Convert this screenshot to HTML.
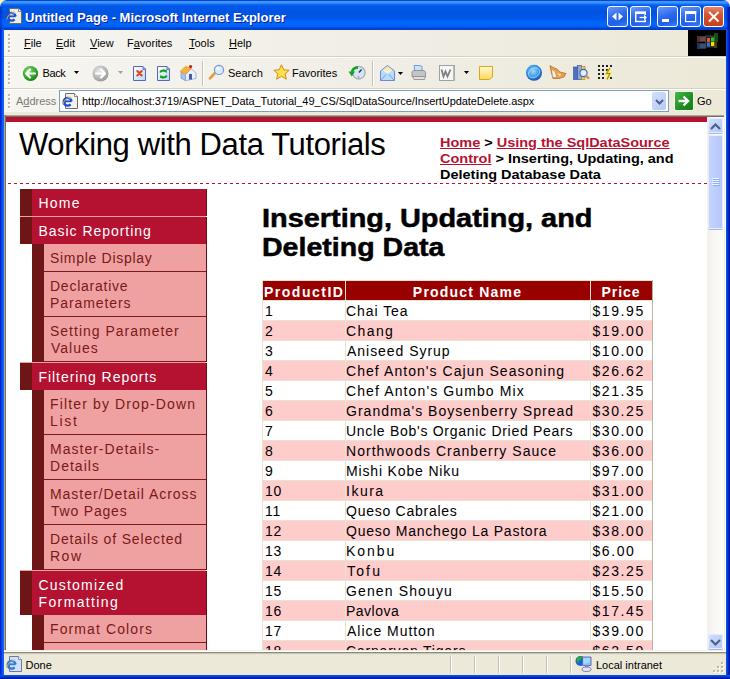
<!DOCTYPE html>
<html><head><meta charset="utf-8"><title>Untitled Page</title>
<style>
html,body{margin:0;padding:0;}
body{width:730px;height:679px;overflow:hidden;position:relative;background:#0054E3;font-family:"Liberation Sans",sans-serif;}
.t{position:absolute;white-space:nowrap;}
.b{position:absolute;}
svg{position:absolute;overflow:visible;}
</style></head><body>

<div class="b" style="left:0px;top:0px;width:12px;height:12px;background:#FFF2B8;"></div>
<div class="b" style="left:718px;top:0px;width:12px;height:12px;background:#F2F1E6;"></div>
<div class="b" style="left:0px;top:0px;width:730px;height:30px;background:linear-gradient(180deg,#0846C8 0px,#0846C8 1px,#3D95FF 1px,#3D95FF 3px,#1470F8 4px,#0058E8 6px,#0054E3 12px,#0056E8 18px,#0064FA 22px,#0066FF 25px,#005FF0 27px,#0041D0 28px,#0041D0 30px);border-radius:7px 7px 0 0;"></div>
<div class="b" style="left:726px;top:7px;width:4px;height:23px;background:linear-gradient(90deg,rgba(0,40,200,0) 0px,rgba(0,30,190,.5) 1px,rgba(0,20,170,.8) 2px,rgba(0,16,150,.9) 4px);"></div>
<div class="b" style="left:0px;top:7px;width:3px;height:23px;background:linear-gradient(90deg,rgba(0,20,180,.6) 0px,rgba(0,40,200,.3) 2px,rgba(0,40,200,0) 3px);"></div>
<div class="b" style="left:0px;top:29px;width:4px;height:650px;background:linear-gradient(90deg,#0019CF 0px,#0831D9 1px,#0046EA 2px,#166AFF 3px,#0A5CF5 4px);"></div>
<div class="b" style="left:726px;top:29px;width:4px;height:650px;background:linear-gradient(90deg,#0A5CF5 0px,#0846E0 1px,#0031D0 2px,#001FB8 3px,#001090 4px);"></div>
<div class="b" style="left:0px;top:675px;width:730px;height:4px;background:linear-gradient(180deg,#0A5CF5 0px,#0846E0 1px,#0031D0 2px,#001FB8 3px,#001090 4px);"></div>
<svg style="left:5.5px;top:7.5px" width="18" height="17" viewBox="0 0 18 17">
<path d="M3.5 0.5h9l3 3v12h-12z" fill="#EEEDE6" stroke="#6E6C60"/>
<path d="M12.5 0.5v3h3" fill="#fff" stroke="#6E6C60" stroke-width=".8"/>
<path d="M1.8 8.3h7.8" stroke="#1C4FD8" stroke-width="1.8"/>
<path d="M9.6 8.3A4 3.9 0 1 0 8.6 11.4" stroke="#1C4FD8" stroke-width="2.3" fill="none"/>
<path d="M7 5.5h2" stroke="#3AA0F8" stroke-width="1"/>
<path d="M0.8 11.5C1.5 8 4 5 8.5 3.8" stroke="#E8B040" stroke-width="1" fill="none" opacity=".9"/>
</svg>
<div class="t" style="left:25px;top:9.50px;font-size:13px;line-height:16px;color:#fff;font-weight:700;letter-spacing:0px;text-shadow:1px 1px 0 #0A1E9A;">Untitled Page - Microsoft Internet Explorer</div>
<div class="b" style="left:607px;top:6px;width:19px;height:19px;border:1px solid #fff;border-radius:3px;background:linear-gradient(160deg,#6A9CF8 0%,#2D6AF0 45%,#1F5EE8 70%,#3E7CF5 100%);"><svg style="left:3px;top:4px" width="13" height="11"><path d="M1 5.5L5.5 1.5v8z M12 5.5L7.5 1.5v8z" fill="#fff"/></svg></div>
<div class="b" style="left:630px;top:6px;width:19px;height:19px;border:1px solid #fff;border-radius:3px;background:linear-gradient(160deg,#6A9CF8 0%,#2D6AF0 45%,#1F5EE8 70%,#3E7CF5 100%);"><svg style="left:3px;top:4px" width="14" height="12"><path d="M1.75 1.5v9h9.5v-2M1.75 1.5h9.5v2.5" stroke="#fff" stroke-width="1.5" fill="none"/><rect x="1" y="0.5" width="11" height="2.5" fill="#fff"/><path d="M5.5 6.5h5" stroke="#fff" stroke-width="1.3"/><path d="M10 3.8l3 2.7-3 2.7z" fill="#fff"/></svg></div>
<div class="b" style="left:657px;top:6px;width:19px;height:19px;border:1px solid #fff;border-radius:3px;background:linear-gradient(160deg,#6A9CF8 0%,#2D6AF0 45%,#1F5EE8 70%,#3E7CF5 100%);"><div class="b" style="left:4px;top:12px;width:7px;height:3px;background:#fff"></div></div>
<div class="b" style="left:680px;top:6px;width:19px;height:19px;border:1px solid #fff;border-radius:3px;background:linear-gradient(160deg,#6A9CF8 0%,#2D6AF0 45%,#1F5EE8 70%,#3E7CF5 100%);"><svg style="left:4px;top:4px" width="12" height="12"><rect x="0.6" y="0.6" width="10" height="10" fill="none" stroke="#fff" stroke-width="1.2"/><rect x="0" y="0" width="11.2" height="3" fill="#fff"/></svg></div>
<div class="b" style="left:703px;top:6px;width:19px;height:19px;border:1px solid #fff;border-radius:3px;background:linear-gradient(180deg,#E2866E 0%,#D6552F 40%,#C8401C 100%);"><svg style="left:4px;top:4px" width="12" height="12"><path d="M1 1l9.5 9.5M10.5 1L1 10.5" stroke="#fff" stroke-width="2"/></svg></div>
<div class="b" style="left:4px;top:30px;width:722px;height:26px;background:linear-gradient(90deg,#F6F5F0 0%,#F0EEE6 50%,#ECE9D8 100%);"></div>
<div class="b" style="left:4px;top:56px;width:722px;height:1px;background:#D7D2BF;"></div>
<div class="b" style="left:4px;top:57px;width:722px;height:1px;background:#FFFFFF;"></div>
<div class="b" style="left:8px;top:34px;width:2px;height:2px;background:#BDB8A6;box-shadow:1px 1px 0 #fff"></div><div class="b" style="left:8px;top:38px;width:2px;height:2px;background:#BDB8A6;box-shadow:1px 1px 0 #fff"></div><div class="b" style="left:8px;top:42px;width:2px;height:2px;background:#BDB8A6;box-shadow:1px 1px 0 #fff"></div><div class="b" style="left:8px;top:46px;width:2px;height:2px;background:#BDB8A6;box-shadow:1px 1px 0 #fff"></div><div class="b" style="left:8px;top:50px;width:2px;height:2px;background:#BDB8A6;box-shadow:1px 1px 0 #fff"></div>
<div class="t" style="left:24px;top:36.19px;font-size:11px;line-height:14px;color:#000;font-weight:400;letter-spacing:0px;"><u>F</u>ile</div>
<div class="t" style="left:56px;top:36.19px;font-size:11px;line-height:14px;color:#000;font-weight:400;letter-spacing:0px;"><u>E</u>dit</div>
<div class="t" style="left:90px;top:36.19px;font-size:11px;line-height:14px;color:#000;font-weight:400;letter-spacing:0px;"><u>V</u>iew</div>
<div class="t" style="left:127px;top:36.19px;font-size:11px;line-height:14px;color:#000;font-weight:400;letter-spacing:0px;">F<u>a</u>vorites</div>
<div class="t" style="left:189px;top:36.19px;font-size:11px;line-height:14px;color:#000;font-weight:400;letter-spacing:0px;"><u>T</u>ools</div>
<div class="t" style="left:229px;top:36.19px;font-size:11px;line-height:14px;color:#000;font-weight:400;letter-spacing:0px;"><u>H</u>elp</div>
<div class="b" style="left:688px;top:30px;width:38px;height:26px;background:#000;"></div>
<svg style="left:688px;top:30px" width="38" height="26" viewBox="0 0 38 26">
<g opacity=".45"><rect x="9" y="6" width="9" height="6" fill="#C06070"/><rect x="9" y="13" width="9" height="6" fill="#4A7AC8"/>
<rect x="12" y="7" width="5" height="4" fill="#F0A0A0"/><rect x="12" y="14" width="5" height="4" fill="#80B0F0"/></g>
<rect x="17.5" y="6" width="9" height="11" fill="#202020" stroke="#505050" stroke-width=".8"/>
<rect x="19" y="8" width="3" height="4" fill="#F05020"/><rect x="23" y="7.5" width="3" height="4" fill="#30C030"/>
<rect x="19" y="12.5" width="3" height="4" fill="#3070E0"/><rect x="23" y="12" width="3" height="4" fill="#F0E000"/>
<g opacity=".6"><rect x="26" y="3" width="4" height="9" fill="#208020"/><rect x="26" y="12" width="3" height="6" fill="#806000"/></g>
</svg>
<div class="b" style="left:4px;top:58px;width:722px;height:30px;background:linear-gradient(90deg,#F6F5F0 0%,#F0EEE6 50%,#ECE9D8 100%);"></div>
<div class="b" style="left:4px;top:88px;width:722px;height:1px;background:#D7D2BF;"></div>
<div class="b" style="left:4px;top:89px;width:722px;height:1px;background:#FFFFFF;"></div>
<div class="b" style="left:8px;top:62px;width:2px;height:2px;background:#BDB8A6;box-shadow:1px 1px 0 #fff"></div><div class="b" style="left:8px;top:66px;width:2px;height:2px;background:#BDB8A6;box-shadow:1px 1px 0 #fff"></div><div class="b" style="left:8px;top:70px;width:2px;height:2px;background:#BDB8A6;box-shadow:1px 1px 0 #fff"></div><div class="b" style="left:8px;top:74px;width:2px;height:2px;background:#BDB8A6;box-shadow:1px 1px 0 #fff"></div><div class="b" style="left:8px;top:78px;width:2px;height:2px;background:#BDB8A6;box-shadow:1px 1px 0 #fff"></div><div class="b" style="left:8px;top:82px;width:2px;height:2px;background:#BDB8A6;box-shadow:1px 1px 0 #fff"></div>
<svg style="left:22px;top:65px" width="17" height="17" viewBox="0 0 17 17">
<defs><radialGradient id="gb" cx="40%" cy="35%" r="65%"><stop offset="0" stop-color="#8EE07A"/><stop offset=".6" stop-color="#3AAE2A"/><stop offset="1" stop-color="#1F7A18"/></radialGradient></defs>
<circle cx="8.5" cy="8.5" r="7.6" fill="url(#gb)"/>
<path d="M4 8.5l4-4M4 8.5l4 4M4 8.5h9" stroke="#fff" stroke-width="2.2" fill="none" stroke-linecap="round"/>
</svg>
<div class="t" style="left:42.5px;top:66.19px;font-size:11px;line-height:14px;color:#000;font-weight:400;letter-spacing:-0.4px;">Back</div>
<svg style="left:74px;top:71px" width="6" height="4"><path d="M0 0h5l-2.5 3z" fill="#000"/></svg>
<svg style="left:92px;top:65px" width="17" height="17" viewBox="0 0 17 17">
<defs><radialGradient id="gf" cx="40%" cy="35%" r="65%"><stop offset="0" stop-color="#E8E8E8"/><stop offset=".6" stop-color="#BDBDBD"/><stop offset="1" stop-color="#9A9A9A"/></radialGradient></defs>
<circle cx="8.5" cy="8.5" r="8" fill="url(#gf)"/>
<path d="M13 8.5l-4-4M13 8.5l-4 4M13 8.5h-9" stroke="#fff" stroke-width="2.2" fill="none" stroke-linecap="round"/>
</svg>
<svg style="left:118px;top:71px" width="6" height="4"><path d="M0 0h5l-2.5 3z" fill="#A0A0A0"/></svg>
<svg style="left:133px;top:66px" width="14" height="16" viewBox="0 0 14 16">
<defs><linearGradient id="dg" x1="0" y1="0" x2="1" y2="1"><stop offset="0" stop-color="#FFFFFF"/><stop offset="1" stop-color="#B8D8F8"/></linearGradient></defs>
<path d="M0.5 0.5h9.5l2.5 2.5v11.5H0.5z" fill="url(#dg)" stroke="#5A68B4"/>
<path d="M10 0.5v3h2.5" fill="#7AB0F0" stroke="#5A68B4" stroke-width=".8"/>
<path d="M4.3 5l4.4 4.4M8.7 5l-4.4 4.4" stroke="#E8401A" stroke-width="2.1" stroke-linecap="round"/>
</svg>
<svg style="left:157px;top:66px" width="14" height="16" viewBox="0 0 14 16">
<path d="M0.5 0.5h9.5l2.5 2.5v11.5H0.5z" fill="url(#dg)" stroke="#5A68B4"/>
<path d="M10 0.5v3h2.5" fill="#7AB0F0" stroke="#5A68B4" stroke-width=".8"/>
<path d="M3.2 6.5c0.5-2 3.5-2.5 4.8-1" stroke="#10A010" stroke-width="2" fill="none"/>
<path d="M6.5 3.5l3.5 0.5-0.5 3.5z" fill="#10A010"/>
<path d="M9.6 9.5c-0.5 2-3.5 2.5-4.8 1" stroke="#10A010" stroke-width="2" fill="none"/>
<path d="M6.5 12.5l-3.5-0.5 0.5-3.5z" fill="#10A010"/>
</svg>
<svg style="left:177px;top:62px" width="22" height="22" viewBox="0 0 22 22">
<path d="M4 10l4.5 2.5v6.2L4 16.2z" fill="#9EC8F0" stroke="#7A90C8" stroke-width=".7"/>
<path d="M8.5 12.5l5.8-5.7 4.7 4.2v5.5l-10.5 2.2z" fill="#E8F0FC" stroke="#8898C8" stroke-width=".7"/>
<rect x="12" y="12" width="3" height="5.5" fill="#4A58A8"/>
<path d="M3.1 9.4l5.6-5.2 5.6 2.6-5.9 5.2z" fill="#F6B23E" stroke="#E59A22" stroke-width=".7"/>
<circle cx="13.6" cy="4.6" r="1.6" fill="#C82010"/>
</svg>
<div class="b" style="left:202px;top:61px;width:1px;height:25px;background:#C5C2B2;"></div>
<div class="b" style="left:203px;top:61px;width:1px;height:25px;background:#FFFFFF;"></div>
<svg style="left:204px;top:60px" width="30" height="26" viewBox="0 0 30 26">
<path d="M10.5 13.5l-4.5 4.8" stroke="#E89A38" stroke-width="2.6" stroke-linecap="round"/>
<circle cx="15" cy="9.9" r="4.6" fill="#D4ECFC" stroke="#7C94D8" stroke-width="1.2"/>
<circle cx="14" cy="8.8" r="1.8" fill="#fff" opacity=".8"/>
</svg>
<div class="t" style="left:228px;top:66.19px;font-size:11px;line-height:14px;color:#000;font-weight:400;letter-spacing:0px;">Search</div>
<svg style="left:273px;top:64px" width="17" height="17" viewBox="0 0 17 17">
<path d="M8.5 0.8l2.3 5 5.4.5-4.1 3.6 1.3 5.3-4.9-2.9-4.9 2.9 1.3-5.3L.8 6.3l5.4-.5z" fill="#FFE050" stroke="#D09010"/>
</svg>
<div class="t" style="left:292px;top:66.19px;font-size:11px;line-height:14px;color:#000;font-weight:400;letter-spacing:0px;">Favorites</div>
<svg style="left:344px;top:60px" width="30" height="26" viewBox="0 0 30 26">
<circle cx="14.8" cy="12.7" r="6.3" fill="#CDE6FA" stroke="#A8A8B0" stroke-width="1.3"/>
<path d="M15 12.5l2.5-3" stroke="#303040" stroke-width="1.3"/>
<circle cx="14.5" cy="17" r=".8" fill="#F06030"/>
<path d="M14 7.5c-3 0-5.5 1.5-6 4.5" stroke="#18A018" stroke-width="2.6" fill="none"/>
<path d="M4.5 11.5h6.5l-3.2 5z" fill="#18A018"/>
</svg>
<div class="b" style="left:372px;top:61px;width:1px;height:25px;background:#C5C2B2;"></div>
<div class="b" style="left:373px;top:61px;width:1px;height:25px;background:#FFFFFF;"></div>
<svg style="left:380px;top:65px" width="16" height="16" viewBox="0 0 16 16">
<path d="M0.5 6L7.5 0.5 14.5 6v9.5H0.5z" fill="#B8DCF8" stroke="#7088D0"/>
<path d="M3 4.5L7.5 1.5 12 4.5 7.5 8z" fill="#FFE8A0"/>
<path d="M2.5 5.5h10l-5 3z" fill="#F8F0E0"/>
<path d="M0.5 15.5L6 9.5M14.5 15.5L9 9.5" stroke="#7088D0" stroke-width=".8"/>
</svg>
<svg style="left:398px;top:72px" width="6" height="4"><path d="M0 0h5l-2.5 3z" fill="#000"/></svg>
<svg style="left:411px;top:64px" width="16" height="17" viewBox="0 0 16 17">
<path d="M3 1.5h6l2 1v6H4z" fill="#C8E4FC" stroke="#6A90D8" stroke-width=".9"/>
<path d="M1 8.5c0-1 1-2 2-2h9c1.2 0 2.5 1 2.5 2v4H1z" fill="#C4C4C4" stroke="#8A8A8A" stroke-width=".9"/>
<path d="M1.5 12.5h13l-1 3H3z" fill="#E0E0E0" stroke="#909090" stroke-width=".9"/>
</svg>
<svg style="left:439px;top:65px" width="17" height="17" viewBox="0 0 17 17">
<rect x="0.5" y="0.5" width="15" height="15" fill="#F6F6F6" stroke="#A0A0A0"/>
<rect x="14" y="1" width="1.5" height="15" fill="#B8B8B8"/>
<path d="M2.5 4.5l2 7 2-5 2 5 3-7" stroke="#808080" stroke-width="1.8" fill="none"/>
</svg>
<svg style="left:464px;top:71px" width="6" height="4"><path d="M0 0h5l-2.5 3z" fill="#000"/></svg>
<svg style="left:479px;top:66px" width="15" height="15" viewBox="0 0 15 15">
<defs><linearGradient id="ng" x1="0" y1="0" x2="0" y2="1"><stop offset="0" stop-color="#FFF8D0"/><stop offset="1" stop-color="#F8D860"/></linearGradient></defs>
<path d="M0.5 0.5h13v10.5l-3 2.5h-10z" fill="url(#ng)" stroke="#D8A818"/>
</svg>
<svg style="left:525px;top:64px" width="18" height="18" viewBox="0 0 18 18">
<defs><radialGradient id="gg" cx="45%" cy="40%" r="60%"><stop offset="0" stop-color="#9ED8FF"/><stop offset=".6" stop-color="#3A98E8"/><stop offset="1" stop-color="#1050B0"/></radialGradient></defs>
<circle cx="9" cy="8.8" r="8" fill="url(#gg)"/>
<ellipse cx="9" cy="8.8" rx="6" ry="4.5" fill="none" stroke="#C8ECFF" stroke-width=".8" opacity=".7" transform="rotate(-30 9 8.8)"/>
</svg>
<svg style="left:549px;top:64px" width="18" height="16" viewBox="0 0 18 16">
<path d="M1 1.5l3 2 4 1.5 3 3 6 1.5-2 3.5-5 1.5H4L2.5 9z" fill="#E8A048" stroke="#A06828" stroke-width=".7"/>
<path d="M3 6l3 2 1 5H4z" fill="#F0F0F0"/>
<path d="M8 9l4 1-1 3" fill="#FFFFFF" opacity=".6"/>
</svg>
<svg style="left:573px;top:64px" width="17" height="17" viewBox="0 0 17 17">
<rect x="0.5" y="3" width="4" height="12.5" fill="#4A70C8" stroke="#304890" stroke-width=".6"/>
<rect x="4.5" y="1.5" width="4" height="14" fill="#90A8D8" stroke="#304890" stroke-width=".6"/>
<rect x="8.5" y="2.5" width="3.5" height="13" fill="#F0C860" stroke="#A08020" stroke-width=".6"/>
<circle cx="10.5" cy="9" r="3.6" fill="#D8F0FF" stroke="#4068B0" stroke-width="1.2"/>
<path d="M13 11.5l3 3.2" stroke="#D89030" stroke-width="2.2"/>
</svg>
<svg style="left:597px;top:65px" width="18" height="16" viewBox="0 0 18 16">
<g fill="#202020">
<rect x="1" y="0" width="2" height="2"/><rect x="5" y="0" width="2" height="2"/><rect x="9" y="0" width="2" height="2"/><rect x="13" y="0" width="2" height="2"/>
<rect x="1" y="4" width="2" height="2"/><rect x="5" y="4" width="2" height="2"/><rect x="9" y="4" width="2" height="2"/>
<rect x="1" y="8" width="2" height="2"/><rect x="5" y="8" width="2" height="2"/>
<rect x="1" y="12" width="2" height="2"/><rect x="5" y="12" width="2" height="2"/><rect x="13" y="12" width="2" height="2"/>
</g>
<path d="M13 3l-3.5 5.5h3.5l-3 6" stroke="#F8D800" stroke-width="2" fill="none"/>
<path d="M13 3l-3.5 5.5h3.5l-3 6" stroke="#504000" stroke-width=".5" fill="none"/>
</svg>
<div class="b" style="left:4px;top:90px;width:722px;height:22px;background:linear-gradient(90deg,#F6F5F0 0%,#F0EEE6 50%,#ECE9D8 100%);"></div>
<div class="b" style="left:8px;top:94px;width:2px;height:2px;background:#BDB8A6;box-shadow:1px 1px 0 #fff"></div><div class="b" style="left:8px;top:98px;width:2px;height:2px;background:#BDB8A6;box-shadow:1px 1px 0 #fff"></div><div class="b" style="left:8px;top:102px;width:2px;height:2px;background:#BDB8A6;box-shadow:1px 1px 0 #fff"></div><div class="b" style="left:8px;top:106px;width:2px;height:2px;background:#BDB8A6;box-shadow:1px 1px 0 #fff"></div>
<div class="t" style="left:16px;top:94.19px;font-size:11px;line-height:14px;color:#7A7A72;font-weight:400;letter-spacing:0px;">A<u>d</u>dress</div>
<div class="b" style="left:59px;top:90px;width:608px;height:20px;border:1px solid #7F9DB9;background:#fff"></div>
<svg style="left:61.5px;top:92.5px" width="18" height="17" viewBox="0 0 18 17">
<path d="M3.5 0.5h9l3 3v12h-12z" fill="#F2F1EC" stroke="#6E6C60"/>
<path d="M12.5 0.5v3h3" fill="#fff" stroke="#6E6C60" stroke-width=".8"/>
<path d="M1.8 8.3h7.8" stroke="#1C4FD8" stroke-width="1.8"/>
<path d="M9.6 8.3A4 3.9 0 1 0 8.6 11.4" stroke="#1C4FD8" stroke-width="2.3" fill="none"/>
<path d="M7 5.5h2" stroke="#3AA0F8" stroke-width="1"/>
<path d="M0.8 11.5C1.5 8 4 5 8.5 3.8" stroke="#E8B040" stroke-width="1" fill="none" opacity=".9"/>
</svg>
<div class="t" style="left:82px;top:94.19px;font-size:11px;line-height:14px;color:#000;font-weight:400;letter-spacing:-0.07px;">http://localhost:3719/ASPNET_Data_Tutorial_49_CS/SqlDataSource/InsertUpdateDelete.aspx</div>
<div class="b" style="left:652px;top:92px;width:14px;height:18px;background:linear-gradient(135deg,#D0DDFC,#B8CAF8);border-radius:2px"><svg style="left:3px;top:7px" width="9" height="6"><path d="M1 1l3.5 3.5L8 1" stroke="#4D6185" stroke-width="2" fill="none"/></svg></div>
<div class="b" style="left:674px;top:91px;width:18px;height:18px;background:linear-gradient(135deg,#48B848,#1E8E1E 60%,#138013);border-radius:2px;border:1px solid #F4F8F0;box-sizing:content-box">
<svg style="left:2px;top:2px" width="14" height="14"><path d="M1.5 7h9M6.5 2.5l4.5 4.5-4.5 4.5" stroke="#fff" stroke-width="2.4" fill="none"/></svg></div>
<div class="t" style="left:697px;top:94.19px;font-size:11px;line-height:14px;color:#000;font-weight:400;letter-spacing:0px;">Go</div>
<div class="b" style="left:4px;top:112px;width:722px;height:3px;background:#ECE9D8;"></div>
<div class="b" style="left:4px;top:115px;width:722px;height:2px;background:linear-gradient(180deg,#ACA899 0px,#ACA899 1px,#716F64 1px);"></div>
<div class="b" style="left:4px;top:115px;width:2px;height:536px;background:linear-gradient(90deg,#ACA899 0px,#ACA899 1px,#716F64 1px);"></div>
<div class="b" style="left:724px;top:115px;width:2px;height:537px;background:linear-gradient(90deg,#F1EFE2 0px,#F1EFE2 1px,#fff 1px);"></div>
<div class="b" style="left:4px;top:650px;width:722px;height:2px;background:linear-gradient(180deg,#F1EFE2 0px,#F1EFE2 1px,#fff 1px);"></div>
<div class="b" style="left:4px;top:652px;width:722px;height:23px;background:linear-gradient(180deg,#8E8B7E 0px,#8E8B7E 1px,#C9C6B6 1px,#C9C6B6 2px,#E2DFCE 2px,#ECE9D8 3px);"></div>
<div class="b" style="left:450px;top:656px;width:1px;height:17px;background:#C5C2B2;"></div>
<div class="b" style="left:451px;top:656px;width:1px;height:17px;background:#fff;"></div>
<div class="b" style="left:474px;top:656px;width:1px;height:17px;background:#C5C2B2;"></div>
<div class="b" style="left:475px;top:656px;width:1px;height:17px;background:#fff;"></div>
<div class="b" style="left:498px;top:656px;width:1px;height:17px;background:#C5C2B2;"></div>
<div class="b" style="left:499px;top:656px;width:1px;height:17px;background:#fff;"></div>
<div class="b" style="left:522px;top:656px;width:1px;height:17px;background:#C5C2B2;"></div>
<div class="b" style="left:523px;top:656px;width:1px;height:17px;background:#fff;"></div>
<div class="b" style="left:546px;top:656px;width:1px;height:17px;background:#C5C2B2;"></div>
<div class="b" style="left:547px;top:656px;width:1px;height:17px;background:#fff;"></div>
<div class="b" style="left:570px;top:656px;width:1px;height:17px;background:#C5C2B2;"></div>
<div class="b" style="left:571px;top:656px;width:1px;height:17px;background:#fff;"></div>
<svg style="left:5.5px;top:655.5px" width="18" height="17" viewBox="0 0 18 17">
<path d="M3.5 0.5h9l3 3v12h-12z" fill="#D4E0F8" stroke="#6878A8"/>
<path d="M12.5 0.5v3h3" fill="#fff" stroke="#6878A8" stroke-width=".8"/>
<path d="M1.8 8.3h7.8" stroke="#2C78E0" stroke-width="1.8"/>
<path d="M9.6 8.3A4 3.9 0 1 0 8.6 11.4" stroke="#2C78E0" stroke-width="2.3" fill="none"/>
<path d="M7 5.5h2" stroke="#3AA0F8" stroke-width="1"/>
<path d="M0.8 11.5C1.5 8 4 5 8.5 3.8" stroke="#E8B040" stroke-width="1" fill="none" opacity=".9"/>
</svg>
<div class="t" style="left:25.5px;top:658.19px;font-size:11px;line-height:14px;color:#000;font-weight:400;letter-spacing:0px;">Done</div>
<svg style="left:570px;top:652px" width="24" height="24" viewBox="0 0 24 24">
<circle cx="10.5" cy="9" r="5" fill="#2060D8"/>
<path d="M7 6c1.5-2 3.5-2 5-1.2l-1.2 3-1.8 1-0.8 2.2c-0.8-0.6-1.3-1.2-1.5-2z" fill="#28B028"/>
<path d="M12.5 5h8.5v8.5h-8.5z" fill="#7CC8F8" stroke="#6A60B0" stroke-width=".9"/>
<path d="M13.5 6h6.5v4c-2 1-4.5 1.5-6.5 2.5z" fill="#B8E8FF" opacity=".6"/>
<path d="M15 13.5v1.5h3.5v-1.5" fill="#8090C8"/>
<ellipse cx="16.5" cy="17.3" rx="4.6" ry="2.2" fill="#E4E4F0" stroke="#7070B0" stroke-width=".9"/>
</svg>
<div class="t" style="left:596px;top:658.19px;font-size:11px;line-height:14px;color:#000;font-weight:400;letter-spacing:0px;">Local intranet</div>
<div class="b" style="left:721px;top:662px;width:2px;height:2px;background:#BDB8A6;box-shadow:1px 1px 0 #fff"></div>
<div class="b" style="left:717px;top:666px;width:2px;height:2px;background:#BDB8A6;box-shadow:1px 1px 0 #fff"></div>
<div class="b" style="left:721px;top:666px;width:2px;height:2px;background:#BDB8A6;box-shadow:1px 1px 0 #fff"></div>
<div class="b" style="left:713px;top:670px;width:2px;height:2px;background:#BDB8A6;box-shadow:1px 1px 0 #fff"></div>
<div class="b" style="left:717px;top:670px;width:2px;height:2px;background:#BDB8A6;box-shadow:1px 1px 0 #fff"></div>
<div class="b" style="left:721px;top:670px;width:2px;height:2px;background:#BDB8A6;box-shadow:1px 1px 0 #fff"></div>
<div class="b" style="left:6px;top:117px;width:701px;height:533px;overflow:hidden;background:#fff"><div class="b" style="left:-6px;top:-117px;width:730px;height:679px">
<div class="b" style="left:6px;top:117px;width:701px;height:5px;background:#B51232;"></div>
<div class="t" style="left:19px;top:124.76px;font-size:31px;line-height:39px;color:#000;font-weight:400;letter-spacing:-0.38px;">Working with Data Tutorials</div>
<div class="t" style="left:440px;top:135.10px;font-size:13px;line-height:16px;color:#000;font-weight:700;letter-spacing:0px;transform:scaleX(1.113);transform-origin:0 0;"><span style="color:#B51232;text-decoration:underline">Home</span> &gt; <span style="color:#B51232;text-decoration:underline">Using the SqlDataSource</span></div>
<div class="t" style="left:440px;top:151.10px;font-size:13px;line-height:16px;color:#000;font-weight:700;letter-spacing:0px;transform:scaleX(1.113);transform-origin:0 0;"><span style="color:#B51232;text-decoration:underline">Control</span> &gt; Inserting, Updating, and</div>
<div class="t" style="left:440px;top:167.10px;font-size:13px;line-height:16px;color:#000;font-weight:700;letter-spacing:0px;transform:scaleX(1.113);transform-origin:0 0;">Deleting Database Data</div>
<div class="b" style="left:6px;top:183px;width:701px;height:1px;background:repeating-linear-gradient(90deg,#B51232 0px,#B51232 3px,transparent 3px,transparent 6px);background-position:2px 0;"></div>
<div class="b" style="left:20px;top:189px;width:12px;height:27px;background:#6E1515;"></div>
<div class="b" style="left:32px;top:189px;width:174px;height:27px;background:#B51232;"></div>
<div class="b" style="left:206px;top:189px;width:1px;height:27px;background:#6E0A14;"></div>
<div class="t" style="left:38.5px;top:194.15px;font-size:14px;line-height:18px;color:#fff;font-weight:400;letter-spacing:1.2px;">Home</div>
<div class="b" style="left:20px;top:216px;width:186px;height:1px;background:#F0A0A0;"></div>
<div class="b" style="left:20px;top:217px;width:12px;height:27px;background:#6E1515;"></div>
<div class="b" style="left:32px;top:217px;width:174px;height:27px;background:#B51232;"></div>
<div class="b" style="left:206px;top:217px;width:1px;height:27px;background:#6E0A14;"></div>
<div class="t" style="left:38.5px;top:222.15px;font-size:14px;line-height:18px;color:#fff;font-weight:400;letter-spacing:0.964px;">Basic Reporting</div>
<div class="b" style="left:32px;top:244px;width:12px;height:28px;background:#6E1515;"></div>
<div class="b" style="left:44px;top:244px;width:162px;height:27px;background:#EFA1A1;"></div>
<div class="b" style="left:206px;top:244px;width:1px;height:28px;background:#6E0A14;"></div>
<div class="b" style="left:44px;top:271px;width:162px;height:1px;background:#7A1A1A;"></div>
<div class="t" style="left:50px;top:249.15px;font-size:14px;line-height:18px;color:#7B1818;font-weight:400;letter-spacing:0.7px;">Simple Display</div>
<div class="b" style="left:32px;top:272px;width:12px;height:45px;background:#6E1515;"></div>
<div class="b" style="left:44px;top:272px;width:162px;height:44px;background:#EFA1A1;"></div>
<div class="b" style="left:206px;top:272px;width:1px;height:45px;background:#6E0A14;"></div>
<div class="b" style="left:44px;top:316px;width:162px;height:1px;background:#7A1A1A;"></div>
<div class="t" style="left:50px;top:277.15px;font-size:14px;line-height:18px;color:#7B1818;font-weight:400;letter-spacing:0.76px;">Declarative</div>
<div class="t" style="left:50px;top:294.15px;font-size:14px;line-height:18px;color:#7B1818;font-weight:400;letter-spacing:0.9px;">Parameters</div>
<div class="b" style="left:32px;top:317px;width:12px;height:45px;background:#6E1515;"></div>
<div class="b" style="left:44px;top:317px;width:162px;height:44px;background:#EFA1A1;"></div>
<div class="b" style="left:206px;top:317px;width:1px;height:45px;background:#6E0A14;"></div>
<div class="b" style="left:44px;top:361px;width:162px;height:1px;background:#7A1A1A;"></div>
<div class="t" style="left:50px;top:322.15px;font-size:14px;line-height:18px;color:#7B1818;font-weight:400;letter-spacing:0.994px;">Setting Parameter</div>
<div class="t" style="left:51px;top:339.15px;font-size:14px;line-height:18px;color:#7B1818;font-weight:400;letter-spacing:1.02px;">Values</div>
<div class="b" style="left:20px;top:362px;width:186px;height:1px;background:#F0A0A0;"></div>
<div class="b" style="left:20px;top:363px;width:12px;height:27px;background:#6E1515;"></div>
<div class="b" style="left:32px;top:363px;width:174px;height:27px;background:#B51232;"></div>
<div class="b" style="left:206px;top:363px;width:1px;height:27px;background:#6E0A14;"></div>
<div class="t" style="left:38.5px;top:368.15px;font-size:14px;line-height:18px;color:#fff;font-weight:400;letter-spacing:0.944px;">Filtering Reports</div>
<div class="b" style="left:32px;top:390px;width:12px;height:45px;background:#6E1515;"></div>
<div class="b" style="left:44px;top:390px;width:162px;height:44px;background:#EFA1A1;"></div>
<div class="b" style="left:206px;top:390px;width:1px;height:45px;background:#6E0A14;"></div>
<div class="b" style="left:44px;top:434px;width:162px;height:1px;background:#7A1A1A;"></div>
<div class="t" style="left:50px;top:395.15px;font-size:14px;line-height:18px;color:#7B1818;font-weight:400;letter-spacing:1.139px;">Filter by Drop-Down</div>
<div class="t" style="left:50px;top:412.15px;font-size:14px;line-height:18px;color:#7B1818;font-weight:400;letter-spacing:1.7px;">List</div>
<div class="b" style="left:32px;top:435px;width:12px;height:45px;background:#6E1515;"></div>
<div class="b" style="left:44px;top:435px;width:162px;height:44px;background:#EFA1A1;"></div>
<div class="b" style="left:206px;top:435px;width:1px;height:45px;background:#6E0A14;"></div>
<div class="b" style="left:44px;top:479px;width:162px;height:1px;background:#7A1A1A;"></div>
<div class="t" style="left:50px;top:440.15px;font-size:14px;line-height:18px;color:#7B1818;font-weight:400;letter-spacing:1.014px;">Master-Details-</div>
<div class="t" style="left:50px;top:457.15px;font-size:14px;line-height:18px;color:#7B1818;font-weight:400;letter-spacing:1.017px;">Details</div>
<div class="b" style="left:32px;top:480px;width:12px;height:45px;background:#6E1515;"></div>
<div class="b" style="left:44px;top:480px;width:162px;height:44px;background:#EFA1A1;"></div>
<div class="b" style="left:206px;top:480px;width:1px;height:45px;background:#6E0A14;"></div>
<div class="b" style="left:44px;top:524px;width:162px;height:1px;background:#7A1A1A;"></div>
<div class="t" style="left:50px;top:485.15px;font-size:14px;line-height:18px;color:#7B1818;font-weight:400;letter-spacing:0.958px;">Master/Detail Across</div>
<div class="t" style="left:51px;top:502.15px;font-size:14px;line-height:18px;color:#7B1818;font-weight:400;letter-spacing:0.8px;">Two Pages</div>
<div class="b" style="left:32px;top:525px;width:12px;height:45px;background:#6E1515;"></div>
<div class="b" style="left:44px;top:525px;width:162px;height:44px;background:#EFA1A1;"></div>
<div class="b" style="left:206px;top:525px;width:1px;height:45px;background:#6E0A14;"></div>
<div class="b" style="left:44px;top:569px;width:162px;height:1px;background:#7A1A1A;"></div>
<div class="t" style="left:50px;top:530.15px;font-size:14px;line-height:18px;color:#7B1818;font-weight:400;letter-spacing:0.856px;">Details of Selected</div>
<div class="t" style="left:50px;top:547.15px;font-size:14px;line-height:18px;color:#7B1818;font-weight:400;letter-spacing:1.5px;">Row</div>
<div class="b" style="left:20px;top:570px;width:186px;height:1px;background:#F0A0A0;"></div>
<div class="b" style="left:20px;top:571px;width:12px;height:44px;background:#6E1515;"></div>
<div class="b" style="left:32px;top:571px;width:174px;height:44px;background:#B51232;"></div>
<div class="b" style="left:206px;top:571px;width:1px;height:44px;background:#6E0A14;"></div>
<div class="t" style="left:38.5px;top:576.15px;font-size:14px;line-height:18px;color:#fff;font-weight:400;letter-spacing:1.2px;">Customized</div>
<div class="t" style="left:38.5px;top:593.15px;font-size:14px;line-height:18px;color:#fff;font-weight:400;letter-spacing:1.378px;">Formatting</div>
<div class="b" style="left:32px;top:615px;width:12px;height:28px;background:#6E1515;"></div>
<div class="b" style="left:44px;top:615px;width:162px;height:27px;background:#EFA1A1;"></div>
<div class="b" style="left:206px;top:615px;width:1px;height:28px;background:#6E0A14;"></div>
<div class="b" style="left:44px;top:642px;width:162px;height:1px;background:#7A1A1A;"></div>
<div class="t" style="left:50px;top:620.15px;font-size:14px;line-height:18px;color:#7B1818;font-weight:400;letter-spacing:1.108px;">Format Colors</div>
<div class="b" style="left:32px;top:643px;width:12px;height:48px;background:#6E1515;"></div>
<div class="b" style="left:44px;top:643px;width:162px;height:47px;background:#EFA1A1;"></div>
<div class="b" style="left:206px;top:643px;width:1px;height:48px;background:#6E0A14;"></div>
<div class="b" style="left:44px;top:690px;width:162px;height:1px;background:#7A1A1A;"></div>
<div class="t" style="left:50px;top:648.15px;font-size:14px;line-height:18px;color:#7B1818;font-weight:400;letter-spacing:0.6px;"></div>
<div class="t" style="left:262px;top:202.84px;font-size:25px;line-height:31px;color:#000;font-weight:700;letter-spacing:0px;transform:scaleX(1.155);transform-origin:0 0;-webkit-text-stroke:0.5px #000;">Inserting, Updating, and</div>
<div class="t" style="left:262px;top:231.84px;font-size:25px;line-height:31px;color:#000;font-weight:700;letter-spacing:0px;transform:scaleX(1.142);transform-origin:0 0;-webkit-text-stroke:0.5px #000;">Deleting Data</div>
<div class="b" style="left:262px;top:280px;width:391px;height:420px;background:#E6E3D3;"></div>
<div class="b" style="left:652px;top:280px;width:1px;height:420px;background:#B8B4A4;"></div>
<div class="b" style="left:263px;top:281px;width:82px;height:19px;background:#990000;"></div>
<div class="b" style="left:346px;top:281px;width:244px;height:19px;background:#990000;"></div>
<div class="b" style="left:591px;top:281px;width:61px;height:19px;background:#990000;"></div>
<div class="t" style="left:264px;top:282.65px;font-size:14px;line-height:18px;color:#fff;font-weight:700;letter-spacing:1.5px;">ProductID</div>
<div class="t" style="left:345px;top:283px;width:245px;text-align:center;font-size:14px;line-height:19px;color:#fff;font-weight:700;letter-spacing:1.2px">Product Name</div>
<div class="t" style="left:590px;top:283px;width:62px;text-align:center;font-size:14px;line-height:19px;color:#fff;font-weight:700;letter-spacing:1px">Price</div>
<div class="b" style="left:263px;top:301px;width:82px;height:19px;background:#fff;"></div>
<div class="b" style="left:346px;top:301px;width:244px;height:19px;background:#fff;"></div>
<div class="b" style="left:591px;top:301px;width:61px;height:19px;background:#fff;"></div>
<div class="t" style="left:265px;top:302.15px;font-size:14px;line-height:18px;color:#000;font-weight:400;letter-spacing:0.8px;">1</div>
<div class="t" style="left:346px;top:302.15px;font-size:14px;line-height:18px;color:#000;font-weight:400;letter-spacing:0.943px;">Chai Tea</div>
<div class="t" style="left:592.5px;top:302.15px;font-size:14px;line-height:18px;color:#000;font-weight:400;letter-spacing:1.58px;">$19.95</div>
<div class="b" style="left:263px;top:321px;width:82px;height:19px;background:#FFCCCC;"></div>
<div class="b" style="left:346px;top:321px;width:244px;height:19px;background:#FFCCCC;"></div>
<div class="b" style="left:591px;top:321px;width:61px;height:19px;background:#FFCCCC;"></div>
<div class="t" style="left:265px;top:322.15px;font-size:14px;line-height:18px;color:#000;font-weight:400;letter-spacing:0.8px;">2</div>
<div class="t" style="left:346px;top:322.15px;font-size:14px;line-height:18px;color:#000;font-weight:400;letter-spacing:1.4px;">Chang</div>
<div class="t" style="left:592.5px;top:322.15px;font-size:14px;line-height:18px;color:#000;font-weight:400;letter-spacing:1.58px;">$19.00</div>
<div class="b" style="left:263px;top:341px;width:82px;height:19px;background:#fff;"></div>
<div class="b" style="left:346px;top:341px;width:244px;height:19px;background:#fff;"></div>
<div class="b" style="left:591px;top:341px;width:61px;height:19px;background:#fff;"></div>
<div class="t" style="left:265px;top:342.15px;font-size:14px;line-height:18px;color:#000;font-weight:400;letter-spacing:0.8px;">3</div>
<div class="t" style="left:347px;top:342.15px;font-size:14px;line-height:18px;color:#000;font-weight:400;letter-spacing:0.967px;">Aniseed Syrup</div>
<div class="t" style="left:592.5px;top:342.15px;font-size:14px;line-height:18px;color:#000;font-weight:400;letter-spacing:1.58px;">$10.00</div>
<div class="b" style="left:263px;top:361px;width:82px;height:19px;background:#FFCCCC;"></div>
<div class="b" style="left:346px;top:361px;width:244px;height:19px;background:#FFCCCC;"></div>
<div class="b" style="left:591px;top:361px;width:61px;height:19px;background:#FFCCCC;"></div>
<div class="t" style="left:265px;top:362.15px;font-size:14px;line-height:18px;color:#000;font-weight:400;letter-spacing:0.8px;">4</div>
<div class="t" style="left:346px;top:362.15px;font-size:14px;line-height:18px;color:#000;font-weight:400;letter-spacing:1.059px;">Chef Anton's Cajun Seasoning</div>
<div class="t" style="left:592.5px;top:362.15px;font-size:14px;line-height:18px;color:#000;font-weight:400;letter-spacing:1.58px;">$26.62</div>
<div class="b" style="left:263px;top:381px;width:82px;height:19px;background:#fff;"></div>
<div class="b" style="left:346px;top:381px;width:244px;height:19px;background:#fff;"></div>
<div class="b" style="left:591px;top:381px;width:61px;height:19px;background:#fff;"></div>
<div class="t" style="left:265px;top:382.15px;font-size:14px;line-height:18px;color:#000;font-weight:400;letter-spacing:0.8px;">5</div>
<div class="t" style="left:346px;top:382.15px;font-size:14px;line-height:18px;color:#000;font-weight:400;letter-spacing:1.11px;">Chef Anton's Gumbo Mix</div>
<div class="t" style="left:592.5px;top:382.15px;font-size:14px;line-height:18px;color:#000;font-weight:400;letter-spacing:1.58px;">$21.35</div>
<div class="b" style="left:263px;top:401px;width:82px;height:19px;background:#FFCCCC;"></div>
<div class="b" style="left:346px;top:401px;width:244px;height:19px;background:#FFCCCC;"></div>
<div class="b" style="left:591px;top:401px;width:61px;height:19px;background:#FFCCCC;"></div>
<div class="t" style="left:265px;top:402.15px;font-size:14px;line-height:18px;color:#000;font-weight:400;letter-spacing:0.8px;">6</div>
<div class="t" style="left:346px;top:402.15px;font-size:14px;line-height:18px;color:#000;font-weight:400;letter-spacing:1.019px;">Grandma's Boysenberry Spread</div>
<div class="t" style="left:592.5px;top:402.15px;font-size:14px;line-height:18px;color:#000;font-weight:400;letter-spacing:1.58px;">$30.25</div>
<div class="b" style="left:263px;top:421px;width:82px;height:19px;background:#fff;"></div>
<div class="b" style="left:346px;top:421px;width:244px;height:19px;background:#fff;"></div>
<div class="b" style="left:591px;top:421px;width:61px;height:19px;background:#fff;"></div>
<div class="t" style="left:265px;top:422.15px;font-size:14px;line-height:18px;color:#000;font-weight:400;letter-spacing:0.8px;">7</div>
<div class="t" style="left:346px;top:422.15px;font-size:14px;line-height:18px;color:#000;font-weight:400;letter-spacing:0.717px;">Uncle Bob's Organic Dried Pears</div>
<div class="t" style="left:592.5px;top:422.15px;font-size:14px;line-height:18px;color:#000;font-weight:400;letter-spacing:1.58px;">$30.00</div>
<div class="b" style="left:263px;top:441px;width:82px;height:19px;background:#FFCCCC;"></div>
<div class="b" style="left:346px;top:441px;width:244px;height:19px;background:#FFCCCC;"></div>
<div class="b" style="left:591px;top:441px;width:61px;height:19px;background:#FFCCCC;"></div>
<div class="t" style="left:265px;top:442.15px;font-size:14px;line-height:18px;color:#000;font-weight:400;letter-spacing:0.8px;">8</div>
<div class="t" style="left:346px;top:442.15px;font-size:14px;line-height:18px;color:#000;font-weight:400;letter-spacing:1.028px;">Northwoods Cranberry Sauce</div>
<div class="t" style="left:592.5px;top:442.15px;font-size:14px;line-height:18px;color:#000;font-weight:400;letter-spacing:1.58px;">$36.00</div>
<div class="b" style="left:263px;top:461px;width:82px;height:19px;background:#fff;"></div>
<div class="b" style="left:346px;top:461px;width:244px;height:19px;background:#fff;"></div>
<div class="b" style="left:591px;top:461px;width:61px;height:19px;background:#fff;"></div>
<div class="t" style="left:265px;top:462.15px;font-size:14px;line-height:18px;color:#000;font-weight:400;letter-spacing:0.8px;">9</div>
<div class="t" style="left:346px;top:462.15px;font-size:14px;line-height:18px;color:#000;font-weight:400;letter-spacing:0.843px;">Mishi Kobe Niku</div>
<div class="t" style="left:592.5px;top:462.15px;font-size:14px;line-height:18px;color:#000;font-weight:400;letter-spacing:1.58px;">$97.00</div>
<div class="b" style="left:263px;top:481px;width:82px;height:19px;background:#FFCCCC;"></div>
<div class="b" style="left:346px;top:481px;width:244px;height:19px;background:#FFCCCC;"></div>
<div class="b" style="left:591px;top:481px;width:61px;height:19px;background:#FFCCCC;"></div>
<div class="t" style="left:265px;top:482.15px;font-size:14px;line-height:18px;color:#000;font-weight:400;letter-spacing:0.8px;">10</div>
<div class="t" style="left:346px;top:482.15px;font-size:14px;line-height:18px;color:#000;font-weight:400;letter-spacing:1.5px;">Ikura</div>
<div class="t" style="left:592.5px;top:482.15px;font-size:14px;line-height:18px;color:#000;font-weight:400;letter-spacing:1.58px;">$31.00</div>
<div class="b" style="left:263px;top:501px;width:82px;height:19px;background:#fff;"></div>
<div class="b" style="left:346px;top:501px;width:244px;height:19px;background:#fff;"></div>
<div class="b" style="left:591px;top:501px;width:61px;height:19px;background:#fff;"></div>
<div class="t" style="left:265px;top:502.15px;font-size:14px;line-height:18px;color:#000;font-weight:400;letter-spacing:0.8px;">11</div>
<div class="t" style="left:346px;top:502.15px;font-size:14px;line-height:18px;color:#000;font-weight:400;letter-spacing:0.746px;">Queso Cabrales</div>
<div class="t" style="left:592.5px;top:502.15px;font-size:14px;line-height:18px;color:#000;font-weight:400;letter-spacing:1.58px;">$21.00</div>
<div class="b" style="left:263px;top:521px;width:82px;height:19px;background:#FFCCCC;"></div>
<div class="b" style="left:346px;top:521px;width:244px;height:19px;background:#FFCCCC;"></div>
<div class="b" style="left:591px;top:521px;width:61px;height:19px;background:#FFCCCC;"></div>
<div class="t" style="left:265px;top:522.15px;font-size:14px;line-height:18px;color:#000;font-weight:400;letter-spacing:0.8px;">12</div>
<div class="t" style="left:346px;top:522.15px;font-size:14px;line-height:18px;color:#000;font-weight:400;letter-spacing:0.771px;">Queso Manchego La Pastora</div>
<div class="t" style="left:592.5px;top:522.15px;font-size:14px;line-height:18px;color:#000;font-weight:400;letter-spacing:1.58px;">$38.00</div>
<div class="b" style="left:263px;top:541px;width:82px;height:19px;background:#fff;"></div>
<div class="b" style="left:346px;top:541px;width:244px;height:19px;background:#fff;"></div>
<div class="b" style="left:591px;top:541px;width:61px;height:19px;background:#fff;"></div>
<div class="t" style="left:265px;top:542.15px;font-size:14px;line-height:18px;color:#000;font-weight:400;letter-spacing:0.8px;">13</div>
<div class="t" style="left:346px;top:542.15px;font-size:14px;line-height:18px;color:#000;font-weight:400;letter-spacing:1.925px;">Konbu</div>
<div class="t" style="left:592.5px;top:542.15px;font-size:14px;line-height:18px;color:#000;font-weight:400;letter-spacing:1.58px;">$6.00</div>
<div class="b" style="left:263px;top:561px;width:82px;height:19px;background:#FFCCCC;"></div>
<div class="b" style="left:346px;top:561px;width:244px;height:19px;background:#FFCCCC;"></div>
<div class="b" style="left:591px;top:561px;width:61px;height:19px;background:#FFCCCC;"></div>
<div class="t" style="left:265px;top:562.15px;font-size:14px;line-height:18px;color:#000;font-weight:400;letter-spacing:0.8px;">14</div>
<div class="t" style="left:347px;top:562.15px;font-size:14px;line-height:18px;color:#000;font-weight:400;letter-spacing:2.167px;">Tofu</div>
<div class="t" style="left:592.5px;top:562.15px;font-size:14px;line-height:18px;color:#000;font-weight:400;letter-spacing:1.58px;">$23.25</div>
<div class="b" style="left:263px;top:581px;width:82px;height:19px;background:#fff;"></div>
<div class="b" style="left:346px;top:581px;width:244px;height:19px;background:#fff;"></div>
<div class="b" style="left:591px;top:581px;width:61px;height:19px;background:#fff;"></div>
<div class="t" style="left:265px;top:582.15px;font-size:14px;line-height:18px;color:#000;font-weight:400;letter-spacing:0.8px;">15</div>
<div class="t" style="left:346px;top:582.15px;font-size:14px;line-height:18px;color:#000;font-weight:400;letter-spacing:1.127px;">Genen Shouyu</div>
<div class="t" style="left:592.5px;top:582.15px;font-size:14px;line-height:18px;color:#000;font-weight:400;letter-spacing:1.58px;">$15.50</div>
<div class="b" style="left:263px;top:601px;width:82px;height:19px;background:#FFCCCC;"></div>
<div class="b" style="left:346px;top:601px;width:244px;height:19px;background:#FFCCCC;"></div>
<div class="b" style="left:591px;top:601px;width:61px;height:19px;background:#FFCCCC;"></div>
<div class="t" style="left:265px;top:602.15px;font-size:14px;line-height:18px;color:#000;font-weight:400;letter-spacing:0.8px;">16</div>
<div class="t" style="left:346px;top:602.15px;font-size:14px;line-height:18px;color:#000;font-weight:400;letter-spacing:0.5px;">Pavlova</div>
<div class="t" style="left:592.5px;top:602.15px;font-size:14px;line-height:18px;color:#000;font-weight:400;letter-spacing:1.58px;">$17.45</div>
<div class="b" style="left:263px;top:621px;width:82px;height:19px;background:#fff;"></div>
<div class="b" style="left:346px;top:621px;width:244px;height:19px;background:#fff;"></div>
<div class="b" style="left:591px;top:621px;width:61px;height:19px;background:#fff;"></div>
<div class="t" style="left:265px;top:622.15px;font-size:14px;line-height:18px;color:#000;font-weight:400;letter-spacing:0.8px;">17</div>
<div class="t" style="left:347px;top:622.15px;font-size:14px;line-height:18px;color:#000;font-weight:400;letter-spacing:0.964px;">Alice Mutton</div>
<div class="t" style="left:592.5px;top:622.15px;font-size:14px;line-height:18px;color:#000;font-weight:400;letter-spacing:1.58px;">$39.00</div>
<div class="b" style="left:263px;top:641px;width:82px;height:19px;background:#FFCCCC;"></div>
<div class="b" style="left:346px;top:641px;width:244px;height:19px;background:#FFCCCC;"></div>
<div class="b" style="left:591px;top:641px;width:61px;height:19px;background:#FFCCCC;"></div>
<div class="t" style="left:265px;top:642.15px;font-size:14px;line-height:18px;color:#000;font-weight:400;letter-spacing:0.8px;">18</div>
<div class="t" style="left:346px;top:642.15px;font-size:14px;line-height:18px;color:#000;font-weight:400;letter-spacing:0.8px;">Carnarvon Tigers</div>
<div class="t" style="left:592.5px;top:642.15px;font-size:14px;line-height:18px;color:#000;font-weight:400;letter-spacing:1.58px;">$62.50</div>
</div></div>
<div class="b" style="left:707px;top:117px;width:17px;height:533px;background:linear-gradient(90deg,#F3F1EC 0%,#FEFEFB 100%);"></div>
<div class="b" style="left:708px;top:118px;width:15px;height:15px;border-radius:2px;background:linear-gradient(135deg,#D4E0FD 0%,#C1D3FB 50%,#B4C8F8 100%);box-shadow:inset 0 0 0 1px #E4ECFE, 0 1px 0 #A8B8E0"><svg style="left:1px;top:4px" width="13" height="9"><path d="M2 7l4.5-4.5L11 7" stroke="#4D6185" stroke-width="2.2" fill="none"/></svg></div>
<div class="b" style="left:708px;top:634px;width:15px;height:15px;border-radius:2px;background:linear-gradient(135deg,#D4E0FD 0%,#C1D3FB 50%,#B4C8F8 100%);box-shadow:inset 0 0 0 1px #E4ECFE, 0 1px 0 #A8B8E0"><svg style="left:1px;top:4px" width="13" height="9"><path d="M2 2l4.5 4.5L11 2" stroke="#4D6185" stroke-width="2.2" fill="none"/></svg></div>
<div class="b" style="left:708px;top:135px;width:15px;height:94px;border-radius:2px;background:linear-gradient(90deg,#C8D6FC 0%,#BCCDFA 50%,#B4C6F8 100%);box-shadow:inset 0 0 0 1px #E4ECFE, 0 1px 0 #A8B8E0"></div>
<div class="b" style="left:712px;top:178px;width:7px;height:1px;background:#EEF4FE;box-shadow:1px 1px 0 #8CB0F8"></div>
<div class="b" style="left:712px;top:180px;width:7px;height:1px;background:#EEF4FE;box-shadow:1px 1px 0 #8CB0F8"></div>
<div class="b" style="left:712px;top:182px;width:7px;height:1px;background:#EEF4FE;box-shadow:1px 1px 0 #8CB0F8"></div>
<div class="b" style="left:712px;top:184px;width:7px;height:1px;background:#EEF4FE;box-shadow:1px 1px 0 #8CB0F8"></div>
</body></html>
